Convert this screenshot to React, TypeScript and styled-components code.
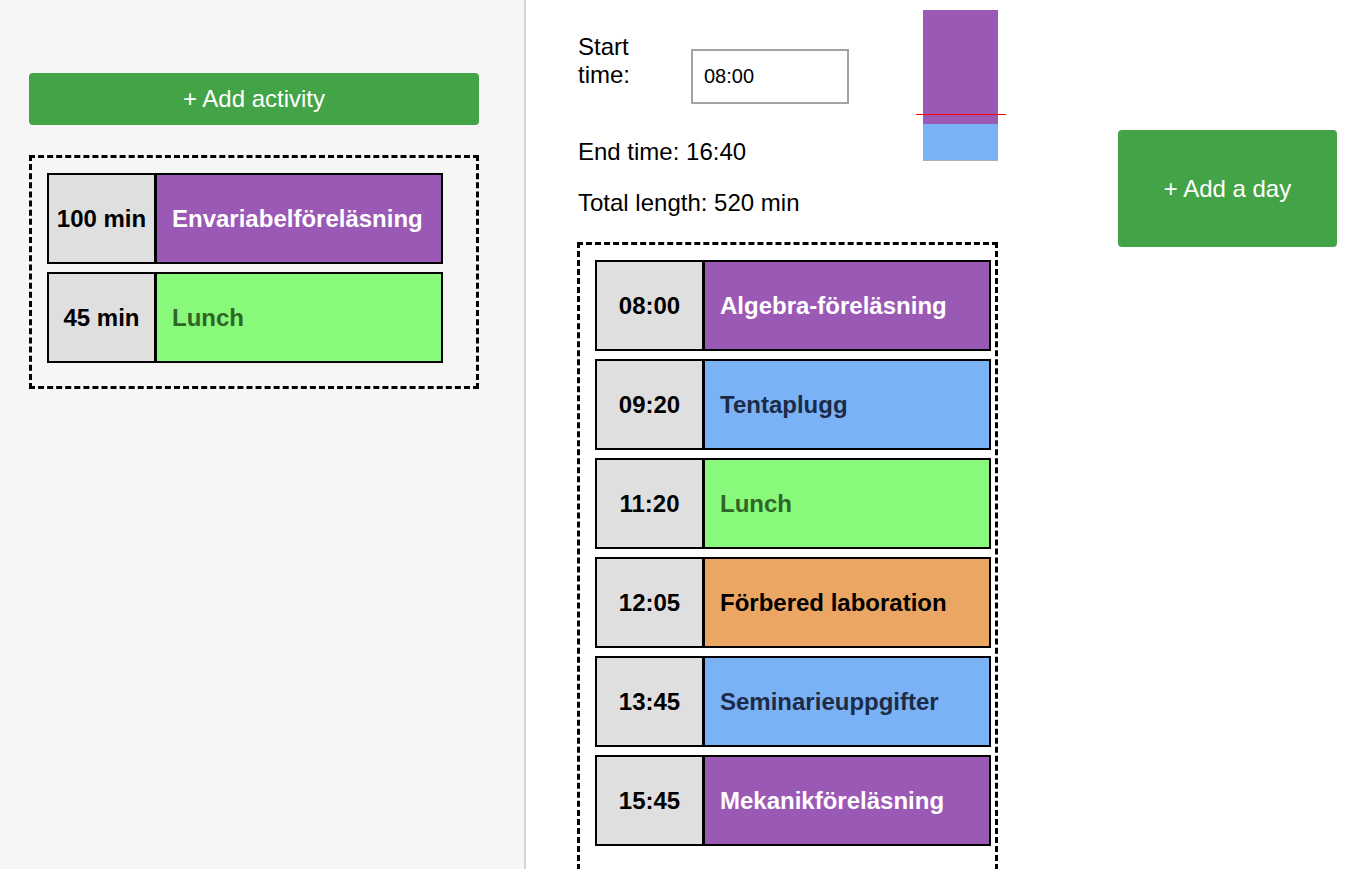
import styled, { createGlobalStyle } from "styled-components"

const GlobalStyle = createGlobalStyle`
  html, body {
    margin: 0;
    padding: 0;
    background: #ffffff;
    font-family: "Liberation Sans", Arial, sans-serif;
    color: #000;
  }
`

const green = "#43a447"
const itemBorder = "2px solid #000"

const colors: { [k: string]: { bg: string, fg: string } } = {
  purple: { bg: "#9b59b6", fg: "#ffffff" },
  blue: { bg: "#7bb2f5", fg: "#1b2b48" },
  green: { bg: "#88f97a", fg: "#2f6527" },
  orange: { bg: "#eba663", fg: "#000000" },
}

const Page = styled.div`
  display: flex;
  align-items: flex-start;
  min-height: 100vh;
`

const Sidebar = styled.aside`
  box-sizing: border-box;
  width: 526px;
  min-height: 100vh;
  flex-shrink: 0;
  padding: 73px 47px 0 29px;
  background: #f6f6f6;
  border-right: 2px solid #d2d2d2;
`

const GreenButton = styled.button<{ $big?: boolean }>`
  box-sizing: border-box;
  display: flex;
  align-items: center;
  justify-content: center;
  border: none;
  border-radius: 4px;
  background: ${green};
  color: #fff;
  font-family: "Liberation Sans", Arial, sans-serif;
  font-size: 24px;
  cursor: pointer;
  padding: 0;
  width: ${p => p.$big ? "219px" : "450px"};
  height: ${p => p.$big ? "117px" : "52px"};
  flex-shrink: 0;
`

const DashedBox = styled.div<{ $w: number }>`
  box-sizing: border-box;
  width: ${p => p.$w}px;
  border: 3px dashed #000;
  padding: 15px;
`

const PoolBox = styled(DashedBox)`
  margin-top: 30px;
`

const Item = styled.div`
  box-sizing: border-box;
  display: flex;
  width: 396px;
  height: 91px;
  border: ${itemBorder};
  margin-bottom: 8px;
`

const TimeCell = styled.div`
  width: 105px;
  flex-shrink: 0;
  display: flex;
  align-items: center;
  justify-content: center;
  background: #dfdfdf;
  border-right: 3px solid #000;
  font-size: 24px;
  font-weight: bold;
`

const NameCell = styled.div<{ $bg: string, $fg: string }>`
  flex: 1;
  display: flex;
  align-items: center;
  padding-left: 15px;
  background: ${p => p.$bg};
  color: ${p => p.$fg};
  font-size: 24px;
  font-weight: bold;
  white-space: nowrap;
`

const Main = styled.main`
  display: flex;
  align-items: flex-start;
  padding: 10px 0 0 51px;
`

const DayColumn = styled.section`
  width: 421px;
  flex-shrink: 0;
`

const Header = styled.div`
  display: flex;
  justify-content: space-between;
  align-items: flex-start;
`

const Info = styled.div`
  padding-top: 23px;
  padding-left: 1px;
  font-size: 24px;
  line-height: 28px;
`

const StartRow = styled.div`
  display: flex;
  align-items: last baseline;
  gap: 53px;
`

const StartLabel = styled.label`
  width: 60px;
`

const TimeInput = styled.input`
  box-sizing: border-box;
  width: 158px;
  height: 55px;
  border: 2px solid #a3a3a3;
  padding: 0 0 0 11px;
  font-family: "Liberation Sans", Arial, sans-serif;
  font-size: 20px;
  color: #000;
  background: #fff;
  outline: none;
`

const InfoLine = styled.p<{ $top: number }>`
  margin: ${p => p.$top}px 0 0 0;
`

const Preview = styled.div`
  position: relative;
  width: 75px;
  height: 151px;
  border-bottom: 1px solid #b0b0b0;
  box-sizing: border-box;
`

const PreviewStack = styled.div`
  display: flex;
  flex-direction: column;
  height: 150px;
  overflow: hidden;
`

const PreviewBlock = styled.div<{ $bg: string }>`
  flex-shrink: 0;
  background: ${p => p.$bg};
`

const NowLine = styled.div`
  position: absolute;
  left: -7px;
  right: -8px;
  height: 1px;
  background: #ff0000;
`

const ScheduleBox = styled(DashedBox)`
  margin-top: 25px;
  padding-bottom: 40px;
`

const AddDay = styled(GreenButton)`
  margin: 120px 0 0 120px;
`

const pool = [
  { len: "100 min", name: "Envariabelföreläsning", color: "purple" },
  { len: "45 min", name: "Lunch", color: "green" },
]

const schedule = [
  { time: "08:00", name: "Algebra-föreläsning", color: "purple", min: 80 },
  { time: "09:20", name: "Tentaplugg", color: "blue", min: 120 },
  { time: "11:20", name: "Lunch", color: "green", min: 45 },
  { time: "12:05", name: "Förbered laboration", color: "orange", min: 100 },
  { time: "13:45", name: "Seminarieuppgifter", color: "blue", min: 120 },
  { time: "15:45", name: "Mekanikföreläsning", color: "purple", min: 55 },
]

const pxPerMin = 114 / 80

export default function App() {
  return (
    <Page>
      <GlobalStyle />
      <Sidebar>
        <GreenButton>+ Add activity</GreenButton>
        <PoolBox $w={450}>
          {pool.map(a => (
            <Item key={a.name}>
              <TimeCell>{a.len}</TimeCell>
              <NameCell $bg={colors[a.color].bg} $fg={colors[a.color].fg}>{a.name}</NameCell>
            </Item>
          ))}
        </PoolBox>
      </Sidebar>
      <Main>
        <DayColumn>
          <Header>
            <Info>
              <StartRow>
                <StartLabel>Start time:</StartLabel>
                <TimeInput type="text" defaultValue="08:00" />
              </StartRow>
              <InfoLine $top={34}>End time: 16:40</InfoLine>
              <InfoLine $top={23}>Total length: 520 min</InfoLine>
            </Info>
            <Preview>
              <PreviewStack>
                {schedule.map(s => (
                  <PreviewBlock key={s.time} $bg={colors[s.color].bg} style={{ height: s.min * pxPerMin }} />
                ))}
              </PreviewStack>
              <NowLine style={{ top: 104 }} />
            </Preview>
          </Header>
          <ScheduleBox $w={421}>
            {schedule.map(s => (
              <Item key={s.time}>
                <TimeCell>{s.time}</TimeCell>
                <NameCell $bg={colors[s.color].bg} $fg={colors[s.color].fg}>{s.name}</NameCell>
              </Item>
            ))}
          </ScheduleBox>
        </DayColumn>
        <AddDay $big>+ Add a day</AddDay>
      </Main>
    </Page>
  )
}
